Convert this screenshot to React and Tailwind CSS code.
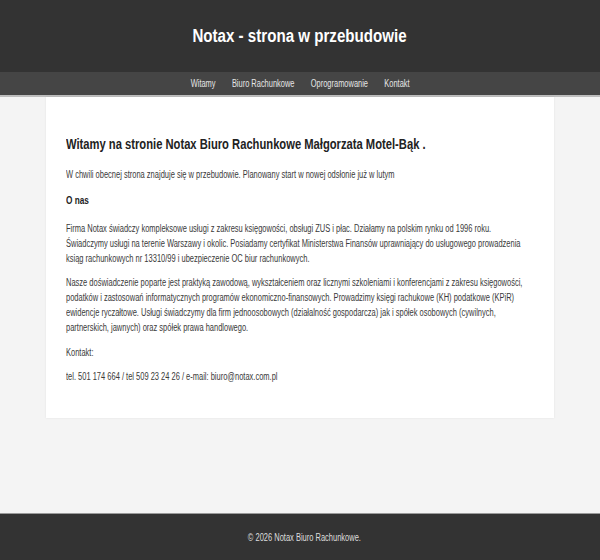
export default function App() {
  return (
    <div
      className="min-h-[560px] flex flex-col bg-[#f4f4f4] overflow-x-hidden"
      style={{ fontFamily: '"Liberation Sans Narrow", "Arial Narrow", "Liberation Sans", sans-serif' }}
    >
      <header className="bg-[#333333] h-[72px] flex items-center justify-center">
        <h1 className="inline-block scale-x-[0.84] text-[18px] font-bold text-white">Notax - strona w przebudowie</h1>
      </header>
      <nav className="bg-[#454545] h-[25px] border-b-2 border-[#bdbdbd] flex items-center justify-center">
        <div className="flex gap-[23px] scale-x-[0.71] text-[10.5px] text-[#e6e6e6]">
          <a>Witamy</a>
          <a>Biuro Rachunkowe</a>
          <a>Oprogramowanie</a>
          <a>Kontakt</a>
        </div>
      </nav>
      <main className="flex-1">
        <div className="mx-[46px] bg-white px-[20px] pt-[38px] pb-[34px] overflow-hidden shadow-[0_0_2px_rgba(0,0,0,0.08)]">
          <h2 className="w-[584px] whitespace-nowrap origin-left scale-x-[0.8] text-[14px] font-bold text-[#222] leading-[18px]">
            Witamy na stronie Notax Biuro Rachunkowe Małgorzata Motel-Bąk .
          </h2>
          <div className="w-[623px] origin-top-left scale-x-[0.75] text-[10px] leading-[15px] text-[#3a3a3a]">
            <p className="mt-[14px]">
              W chwili obecnej strona znajduje się w przebudowie. Planowany start w nowej odsłonie już w lutym
            </p>
            <h3 className="mt-[11px] text-[11px] font-bold text-[#222]">O nas</h3>
            <p className="mt-[13px]">
              Firma Notax świadczy kompleksowe usługi z zakresu księgowości, obsługi ZUS i płac. Działamy na polskim rynku od 1996 roku. Świadczymy usługi na terenie Warszawy i okolic. Posiadamy certyfikat Ministerstwa Finansów uprawniający do usługowego prowadzenia ksiąg rachunkowych nr 13310/99 i ubezpieczenie OC biur rachunkowych.
            </p>
            <p className="mt-[9px]">
              Nasze doświadczenie poparte jest praktyką zawodową, wykształceniem oraz licznymi szkoleniami i konferencjami z zakresu księgowości, podatków i zastosowań informatycznych programów ekonomiczno-finansowych. Prowadzimy księgi rachukowe (KH) podatkowe (KPiR) ewidencje ryczałtowe. Usługi świadczymy dla firm jednoosobowych (działalność gospodarcza) jak i spółek osobowych (cywilnych, partnerskich, jawnych) oraz spółek prawa handlowego.
            </p>
            <p className="mt-[10px]">Kontakt:</p>
            <p className="mt-[9px]">tel. 501 174 664 / tel 509 23 24 26 / e-mail: biuro@notax.com.pl</p>
          </div>
        </div>
      </main>
      <footer className="bg-[#333333] border-t border-[#9a9a9a] h-[47px] flex items-center justify-center pl-[8px]">
        <span className="inline-block scale-x-[0.75] text-[10px] text-[#dddddd]">© 2026 Notax Biuro Rachunkowe.</span>
      </footer>
    </div>
  );
}
